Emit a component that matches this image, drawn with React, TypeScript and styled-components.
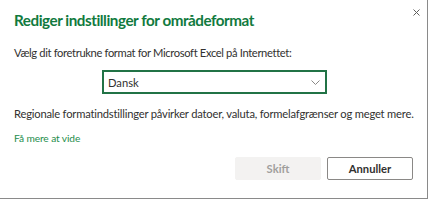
import { createGlobalStyle, styled } from "styled-components";

const Global = createGlobalStyle`
  html, body {
    margin: 0;
    padding: 0;
    background: #ffffff;
  }
  body {
    font-family: Lato, "Open Sans", sans-serif;
  }
`;

const Dialog = styled.div`
  position: relative;
  box-sizing: border-box;
  width: 428px;
  height: 199px;
  background: #ffffff;
  border-right: 1px solid #8a8a8a;
  border-bottom: 1px solid #8a8a8a;
  padding: 10px 14px 0 14px;
  display: flex;
  flex-direction: column;
  align-items: flex-start;
`;

const Title = styled.h1`
  margin: 0;
  font-size: 15.2px;
  font-weight: 700;
  letter-spacing: -0.45px;
  color: #117a3e;
  line-height: 20px;
`;

const CloseButton = styled.button`
  position: absolute;
  top: 4px;
  right: 3px;
  width: 16px;
  height: 16px;
  padding: 0;
  border: none;
  background: transparent;
  display: flex;
  align-items: center;
  justify-content: center;
`;

const Text = styled.p<{ $tight?: boolean }>`
  margin: 0;
  font-size: 11.2px;
  letter-spacing: ${(p) => (p.$tight ? "-0.36px" : "-0.2px")};
  color: #323130;
  line-height: 16px;
  white-space: nowrap;
`;

const Prompt = styled(Text)`
  margin-top: 14.5px;
`;

const SelectRow = styled.div`
  display: flex;
  padding-left: 88px;
  margin-top: 9.5px;
`;

const Select = styled.div`
  box-sizing: border-box;
  width: 225px;
  height: 24px;
  border: 2px solid #217346;
  display: flex;
  align-items: center;
  justify-content: space-between;
  padding: 0 5px 0 4px;
  font-size: 11.2px;
  color: #323130;
`;

const Info = styled(Text)`
  margin-top: 11.5px;
`;

const Link = styled.a`
  margin-top: 9px;
  font-size: 10.2px;
  letter-spacing: -0.1px;
  line-height: 14px;
  color: #1e8d4c;
  text-decoration: none;
`;

const Footer = styled.div`
  align-self: stretch;
  display: flex;
  justify-content: flex-end;
  gap: 6px;
  margin-top: 12px;
`;

const Button = styled.button<{ $primary?: boolean }>`
  box-sizing: border-box;
  width: 86px;
  height: 23px;
  font-family: inherit;
  font-size: 11.2px;
  font-weight: 700;
  border-radius: 2px;
  border: 1px solid ${(p) => (p.$primary ? "#f3f2f1" : "#8a8886")};
  background: ${(p) => (p.$primary ? "#f3f2f1" : "#ffffff")};
  color: ${(p) => (p.$primary ? "#a19f9d" : "#323130")};
`;

export default function App() {
  return (
    <>
      <Global />
      <Dialog>
        <Title>Rediger indstillinger for områdeformat</Title>
        <CloseButton aria-label="Luk">
          <svg width="7" height="7" viewBox="0 0 7 7">
            <path d="M0.5 0.5 L6.5 6.5 M6.5 0.5 L0.5 6.5" stroke="#605e5c" strokeWidth="1" />
          </svg>
        </CloseButton>
        <Prompt $tight>Vælg dit foretrukne format for Microsoft Excel på Internettet:</Prompt>
        <SelectRow>
          <Select>
            <span>Dansk</span>
            <svg width="9" height="5" viewBox="0 0 9 5">
              <path d="M0.5 0.5 L4.5 4.5 L8.5 0.5" stroke="#8a8886" strokeWidth="1" fill="none" />
            </svg>
          </Select>
        </SelectRow>
        <Info>Regionale formatindstillinger påvirker datoer, valuta, formelafgrænser og meget mere.</Info>
        <Link href="#">Få mere at vide</Link>
        <Footer>
          <Button $primary disabled>Skift</Button>
          <Button>Annuller</Button>
        </Footer>
      </Dialog>
    </>
  );
}
